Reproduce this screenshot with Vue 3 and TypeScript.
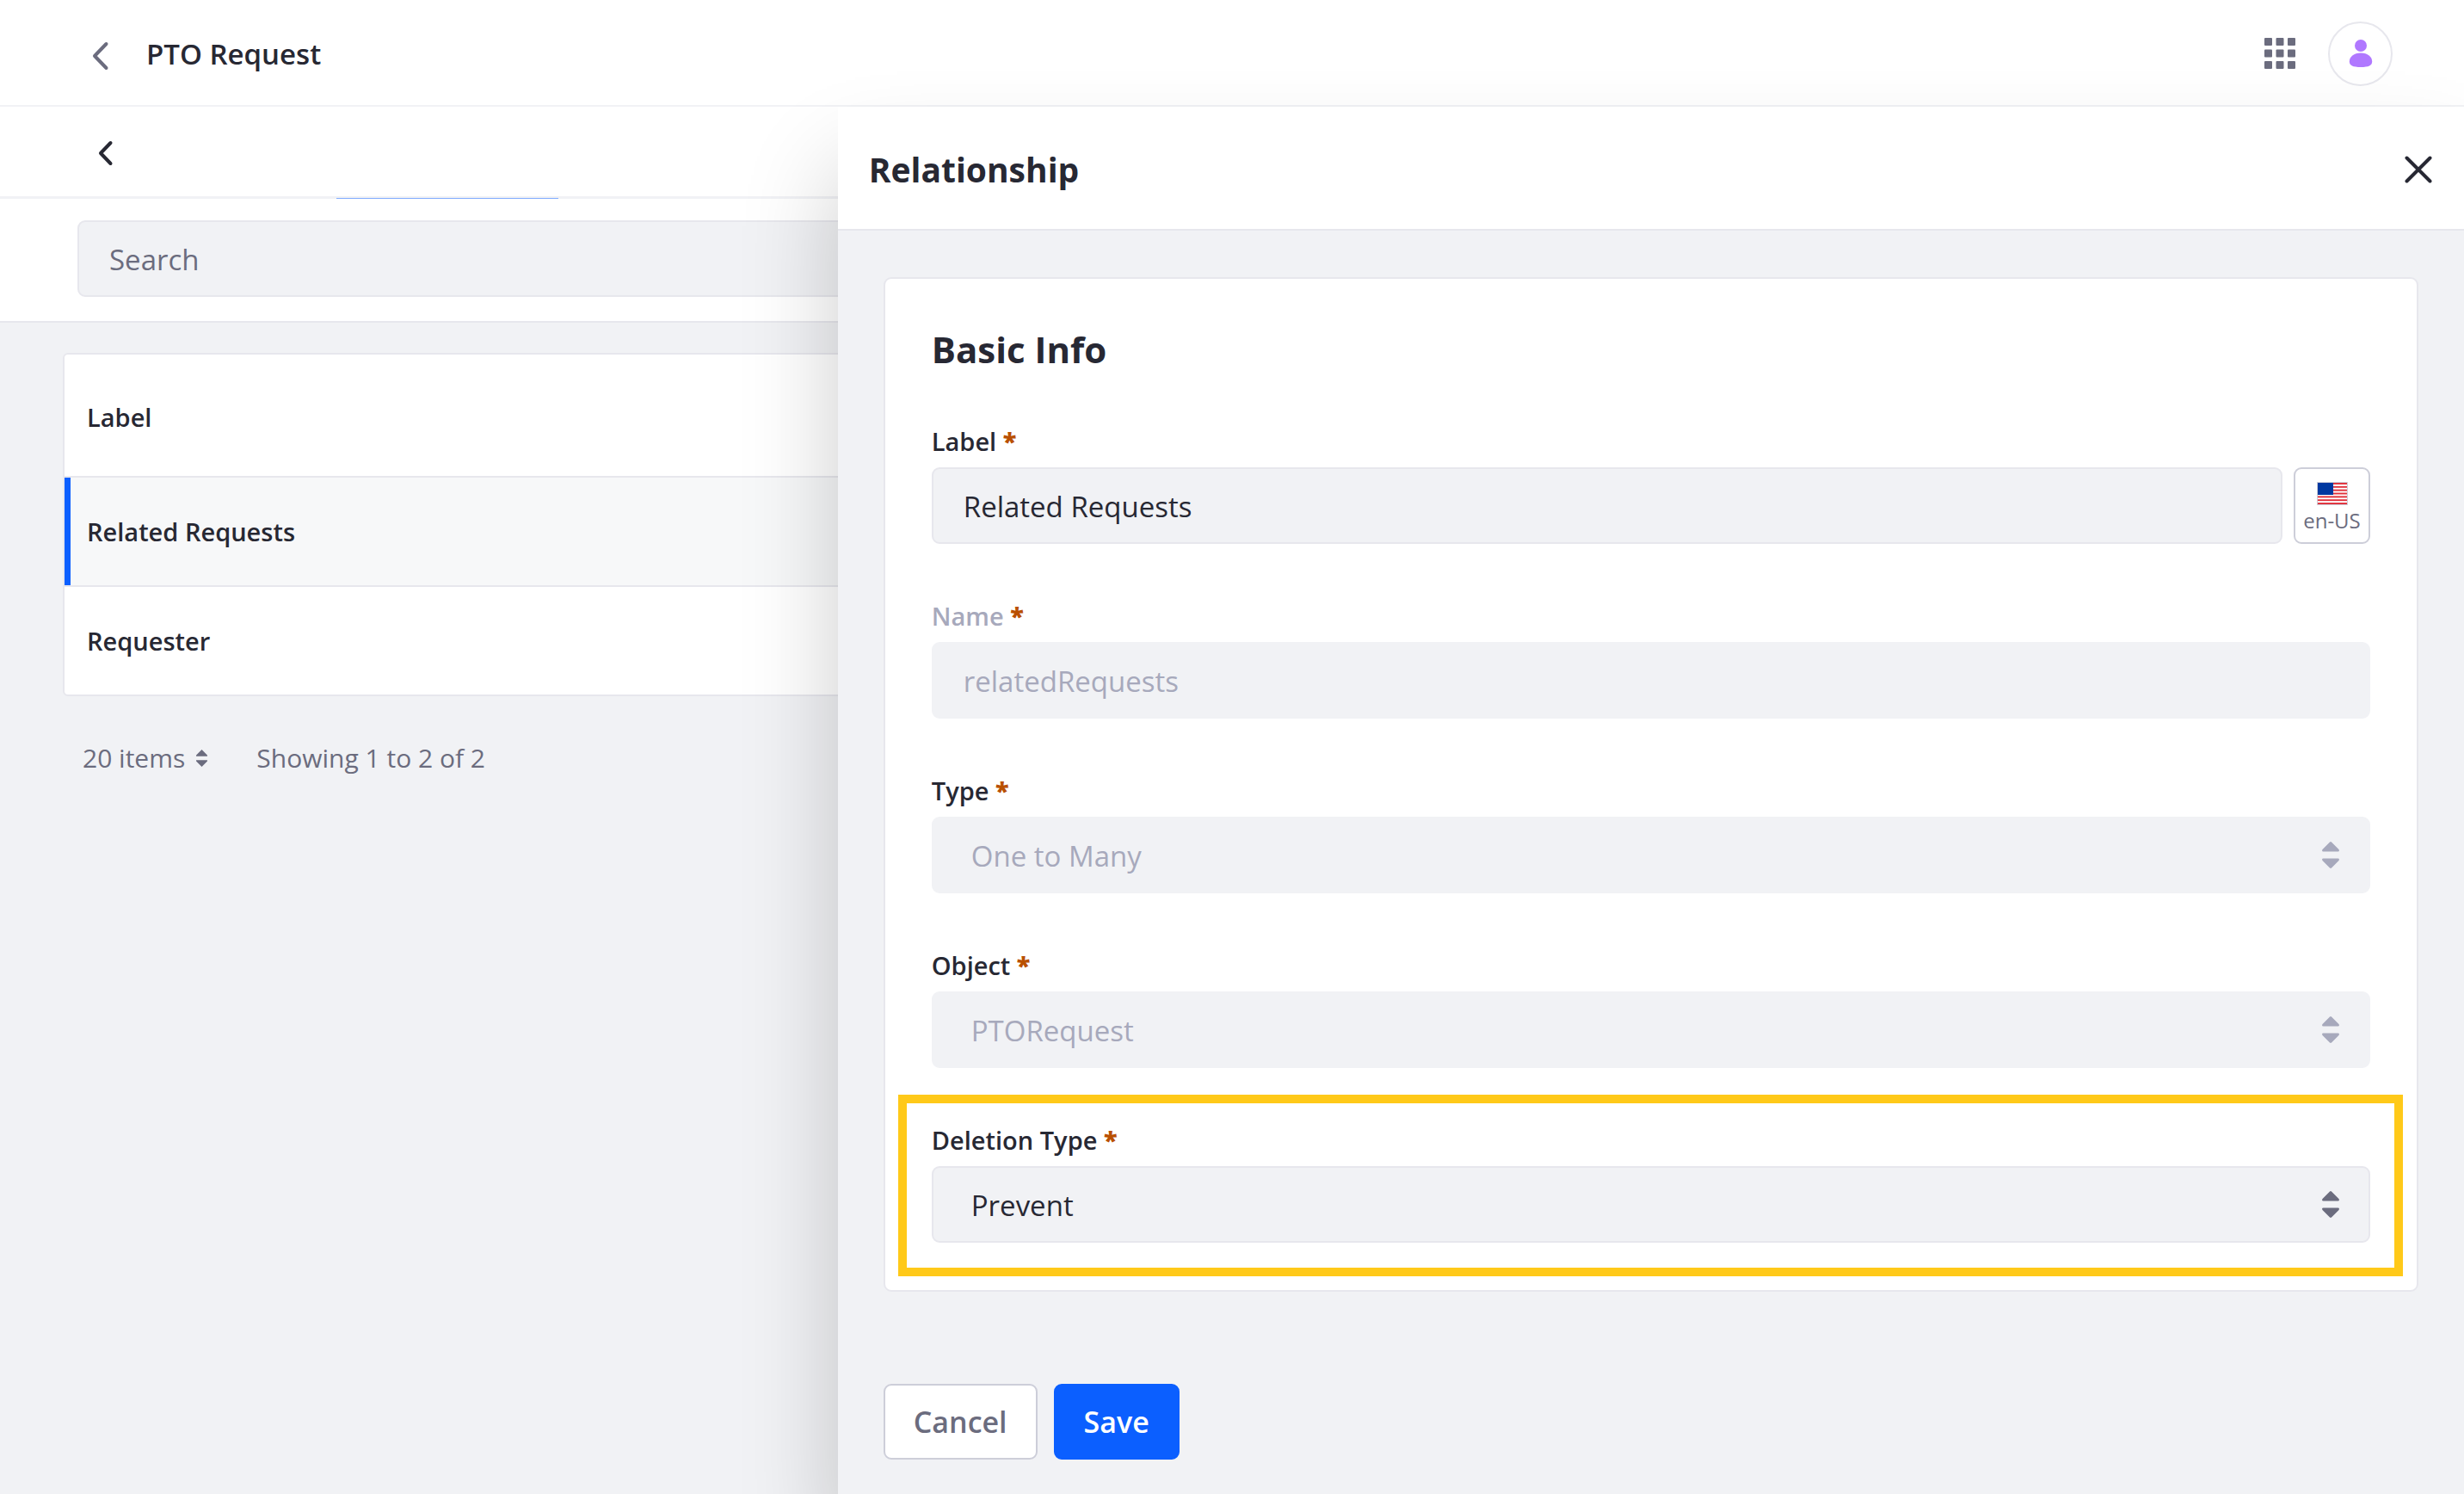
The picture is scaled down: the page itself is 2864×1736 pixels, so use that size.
<script setup lang="ts">
import { ref } from 'vue'

interface Row {
  label: string
  active: boolean
}

const rows: Row[] = [
  { label: 'Related Requests', active: true },
  { label: 'Requester', active: false },
]

const search = ref('')
const label = ref('Related Requests')
const name = ref('relatedRequests')
const type = ref('One to Many')
const objectName = ref('PTORequest')
const deletionType = ref('Prevent')
const deletionTypes: string[] = ['Prevent', 'Cascade', 'Disassociate']
const stripes: number[] = [0, 2, 4, 6, 8, 10, 12]
const cells: number[] = [0, 1, 2, 3, 4, 5, 6, 7, 8]
</script>

<template>
  <div class="page">
    <header class="topbar">
      <a class="back" href="#" aria-label="Back">
        <svg width="20" height="34" viewBox="0 0 20 34"><path d="M16.500 3L3 17l13.500 14" /></svg>
      </a>
      <h1 class="topbar-title">PTO Request</h1>
      <button class="icon-button apps" type="button" aria-label="Applications">
        <svg width="36" height="36" viewBox="0 0 36 36">
          <rect
            v-for="c in cells"
            :key="c"
            :x="(c % 3) * 13.5"
            :y="Math.floor(c / 3) * 13.5"
            width="9"
            height="9"
            rx="1"
          />
        </svg>
      </button>
      <button class="avatar" type="button" aria-label="User menu">
        <svg width="28" height="34" viewBox="0 0 28 34">
          <circle cx="14" cy="8" r="7" />
          <path d="M14 16.500c8 0 13.200 4.500 13.200 10 0 4.500-4 6.500-13.200 6.500S.8 31 .8 26.500c0-5.500 5.200-10 13.200-10z" />
        </svg>
      </button>
    </header>

    <nav class="tabs">
      <button class="icon-button tabs-back" type="button" aria-label="Previous">
        <svg width="18" height="30" viewBox="0 0 18 30"><path d="M14.500 3L3 15l11.500 12" /></svg>
      </button>
      <span class="tab-marker"></span>
    </nav>

    <section class="search-bar">
      <input v-model="search" class="control" type="search" placeholder="Search" aria-label="Search" />
    </section>

    <main class="list">
      <div class="table-card">
        <table class="table">
          <thead>
            <tr><th scope="col">Label</th></tr>
          </thead>
          <tbody>
            <tr v-for="row in rows" :key="row.label" :class="{ active: row.active }">
              <td>{{ row.label }}</td>
            </tr>
          </tbody>
        </table>
      </div>
      <div class="pager">
        <button class="pager-size" type="button">
          20 items
          <svg width="13" height="20" viewBox="0 0 20 31">
            <path d="M10 0l10 10v2H0v-2zM10 31L0 21v-2h20v2z" />
          </svg>
        </button>
        <span>Showing 1 to 2 of 2</span>
      </div>
    </main>

    <aside class="drawer" aria-labelledby="drawer-title">
      <header class="drawer-header">
        <h2 id="drawer-title">Relationship</h2>
        <button class="icon-button" type="button" aria-label="Close">
          <svg width="32" height="32" viewBox="0 0 32 32"><path d="M2.500 2.500l27 27M29.500 2.500l-27 27" /></svg>
        </button>
      </header>

      <form class="drawer-body" @submit.prevent>
        <div class="sheet">
          <h3>Basic Info</h3>

          <div class="field">
            <label for="f-label">Label <span class="req">*</span></label>
            <div class="input-row">
              <input id="f-label" v-model="label" class="control" type="text" />
              <button class="locale" type="button">
                <svg width="36" height="27" viewBox="0 0 36 27">
                  <rect width="36" height="27" fill="#cdced9" />
                  <rect x="1" y="1" width="34" height="25" fill="#fff" />
                  <rect
                    v-for="s in stripes"
                    :key="s"
                    x="1"
                    :y="1 + (s * 25) / 13"
                    width="34"
                    :height="25 / 13"
                    fill="#e0313b"
                  />
                  <rect x="1" y="1" width="18" height="14" fill="#0038a0" />
                </svg>
                <span>en-US</span>
              </button>
            </div>
          </div>

          <div class="field disabled">
            <label for="f-name">Name <span class="req">*</span></label>
            <input id="f-name" v-model="name" class="control" type="text" disabled />
          </div>

          <div class="field">
            <label for="f-type">Type <span class="req">*</span></label>
            <div class="select">
              <select id="f-type" v-model="type" class="control" disabled>
                <option>One to Many</option>
              </select>
              <svg class="muted" width="20" height="31" viewBox="0 0 20 31">
                <path d="M9 .5q1-.8 2 0l8.500 8.500q1.200 2.500-1 2.500h-17q-2.200 0-1-2.500zM9 30.500q1 .8 2 0l8.500-8.500q1.200-2.500-1-2.500h-17q-2.200 0-1 2.500z" />
              </svg>
            </div>
          </div>

          <div class="field">
            <label for="f-object">Object <span class="req">*</span></label>
            <div class="select">
              <select id="f-object" v-model="objectName" class="control" disabled>
                <option>PTORequest</option>
              </select>
              <svg class="muted" width="20" height="31" viewBox="0 0 20 31">
                <path d="M9 .5q1-.8 2 0l8.500 8.500q1.200 2.500-1 2.500h-17q-2.200 0-1-2.500zM9 30.500q1 .8 2 0l8.500-8.500q1.200-2.500-1-2.500h-17q-2.200 0-1 2.500z" />
              </svg>
            </div>
          </div>

          <div class="field highlight">
            <label for="f-deletion">Deletion Type <span class="req">*</span></label>
            <div class="select">
              <select id="f-deletion" v-model="deletionType" class="control">
                <option v-for="option in deletionTypes" :key="option">{{ option }}</option>
              </select>
              <svg width="20" height="31" viewBox="0 0 20 31">
                <path d="M9 .5q1-.8 2 0l8.500 8.500q1.200 2.500-1 2.500h-17q-2.200 0-1-2.500zM9 30.500q1 .8 2 0l8.500-8.500q1.200-2.500-1-2.500h-17q-2.200 0-1 2.500z" />
              </svg>
            </div>
          </div>
        </div>

        <div class="actions">
          <button class="btn" type="button">Cancel</button>
          <button class="btn primary" type="submit">Save</button>
        </div>
      </form>
    </aside>
  </div>
</template>

<style>
body {
  background: #f1f2f5;
}
</style>

<style scoped>
.page,
.page * {
  box-sizing: border-box;
}

.page {
  position: relative;
  min-height: 100vh;
  overflow: hidden;
  background: #f1f2f5;
  color: #272833;
  font-family: 'Open Sans', 'Noto Sans', sans-serif;
  font-size: 33px;
  line-height: 48px;
}

button,
input,
select {
  font: inherit;
  color: inherit;
  margin: 0;
}

h1,
h2,
h3 {
  margin: 0;
}

svg {
  display: block;
  flex: none;
}

.icon-button {
  display: flex;
  padding: 0;
  border: 0;
  background: none;
}

/* top bar */
.topbar {
  display: flex;
  align-items: center;
  height: 124px;
  padding: 2px 83px 0 107px;
  background: #fff;
  border-bottom: 2px solid #f1f2f5;
}

.back path,
.tabs-back path,
.drawer-header path {
  fill: none;
  stroke: #272833;
  stroke-width: 4;
  stroke-linecap: round;
  stroke-linejoin: round;
}

.back {
  padding-top: 6px;
}

.back path {
  stroke: #6b6c7e;
}

.topbar-title {
  margin-left: 43px;
  padding-top: 2px;
  font-size: 33px;
  font-weight: 600;
}

.apps {
  margin-left: auto;
  fill: #6b6c7e;
}

.avatar {
  display: flex;
  align-items: center;
  justify-content: center;
  width: 75px;
  height: 75px;
  margin-left: 38px;
  padding: 0;
  background: #fff;
  border: 2px solid #e7e7ed;
  border-radius: 50%;
  fill: #b078ff;
}

/* tab strip */
.tabs {
  display: flex;
  align-items: center;
  height: 107px;
  padding: 4px 0 0 114px;
  background: #fff;
  border-bottom: 3px solid #f1f2f5;
}

.tab-marker {
  align-self: flex-end;
  width: 258px;
  height: 1px;
  margin: 0 0 -3px 259px;
  background: #80acff;
}

.search-bar {
  padding: 25px 90px 28px;
  background: #fff;
  border-bottom: 2px solid #e7e7ed;
}

.control {
  display: block;
  width: 100%;
  height: 89px;
  padding: 2px 35px 0;
  background: #f1f2f5;
  border: 2px solid #e7e7ed;
  border-radius: 9px;
  outline: 0;
  appearance: none;
}

.control::placeholder {
  color: #6b6c7e;
  opacity: 1;
}

.control:disabled {
  border-color: #f1f2f5;
  color: #a7a9bc;
  opacity: 1;
}

/* list */
.list {
  padding: 35px 73px;
}

.table-card {
  overflow: hidden;
  background: #fff;
  border: 2px solid #e7e7ed;
  border-radius: 6px;
}

.table {
  width: 100%;
  border-collapse: separate;
  border-spacing: 0;
  font-size: 29px;
  font-weight: 600;
}

.table th,
.table td {
  padding: 0 26px;
  text-align: left;
  font-weight: 600;
}

.table th {
  height: 143px;
  padding-top: 4px;
}

.table td {
  height: 125px;
}

.table th,
.table tr.active td {
  border-bottom: 2px solid #e7e7ed;
}

.table tr.active td {
  height: 127px;
  background: #f7f8f9;
  box-shadow: inset 7px 0 #0b5fff;
}

.pager {
  display: flex;
  align-items: center;
  gap: 57px;
  margin-top: 48px;
  padding-left: 23px;
  color: #6b6c7e;
  font-size: 30px;
}

.pager-size {
  display: flex;
  align-items: center;
  gap: 13px;
  padding: 0;
  background: none;
  border: 0;
  fill: #6b6c7e;
}

/* drawer */
.drawer {
  position: absolute;
  top: 124px;
  right: 0;
  bottom: 0;
  width: 66%;
  background: #f1f2f5;
  box-shadow: 0 70px 106px rgba(0, 0, 0, 0.2);
}

.drawer-header {
  display: flex;
  align-items: center;
  justify-content: space-between;
  height: 144px;
  padding: 3px 37px 0 36px;
  background: #fff;
  border-bottom: 2px solid #e7e7ed;
}

.drawer-header h2,
.sheet h3 {
  font-size: 42px;
  font-weight: 700;
  line-height: 60px;
}

.drawer-header h2 {
  font-size: 39px;
}

.drawer-body {
  padding: 54px 53px;
}

.sheet {
  padding: 52px 54px 55px;
  background: #fff;
  border: 2px solid #e7e7ed;
  border-radius: 9px;
}

.field {
  position: relative;
  margin-top: 66px;
}

h3 + .field {
  margin-top: 59px;
}

.field label {
  display: block;
  height: 48px;
  font-size: 29px;
  font-weight: 600;
  line-height: 36px;
}

.disabled label {
  color: #a7a9bc;
}

.req {
  color: #b95000;
  font-weight: 800;
}

.input-row {
  display: flex;
  gap: 13px;
}

.locale {
  display: flex;
  flex: none;
  flex-direction: column;
  align-items: center;
  justify-content: center;
  width: 89px;
  padding: 8px 0 0;
  background: #fff;
  border: 2px solid #cdced9;
  border-radius: 9px;
  color: #6b6c7e;
  font-size: 24px;
  line-height: 36px;
}

.select {
  display: grid;
  align-items: center;
}

.select > * {
  grid-area: 1 / 1;
}

.select .control {
  padding-left: 44px;
}

.select svg {
  justify-self: end;
  margin-right: 36px;
  fill: #6b6c7e;
  pointer-events: none;
}

.select .muted {
  fill: #a7a9bc;
}

/* callout frame drawn around the field */
.highlight::after {
  content: '';
  position: absolute;
  inset: -35px -38px -39px -39px;
  border: 10px solid #ffc919;
  pointer-events: none;
}

.actions {
  display: flex;
  gap: 19px;
  margin-top: 107px;
}

.btn {
  height: 88px;
  padding: 0 33px;
  background: #fff;
  border: 2px solid #cdced9;
  border-radius: 9px;
  color: #6b6c7e;
  font-size: 34px;
  font-weight: 600;
}

.primary {
  background: #0b5fff;
  border-color: #0b5fff;
  color: #fff;
}
</style>
